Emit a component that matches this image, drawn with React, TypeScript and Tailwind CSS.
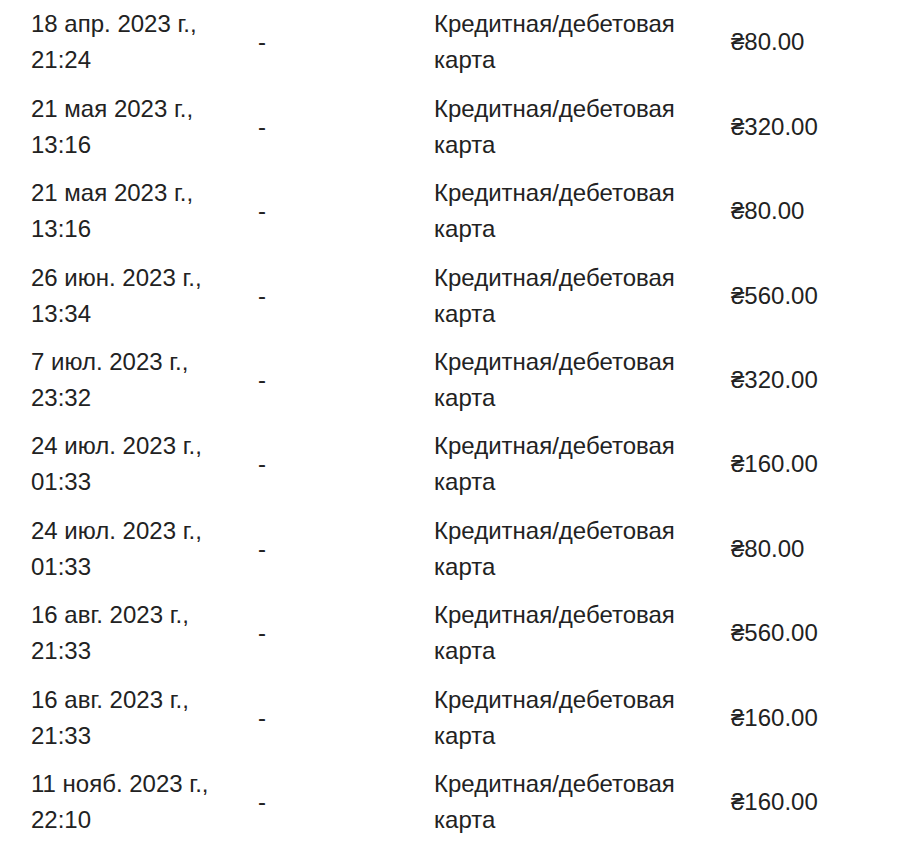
import React from 'react';

const rows = [
  { date: "18 апр. 2023 г.,", time: "21:24", amount: "₴80.00" },
  { date: "21 мая 2023 г.,", time: "13:16", amount: "₴320.00" },
  { date: "21 мая 2023 г.,", time: "13:16", amount: "₴80.00" },
  { date: "26 июн. 2023 г.,", time: "13:34", amount: "₴560.00" },
  { date: "7 июл. 2023 г.,", time: "23:32", amount: "₴320.00" },
  { date: "24 июл. 2023 г.,", time: "01:33", amount: "₴160.00" },
  { date: "24 июл. 2023 г.,", time: "01:33", amount: "₴80.00" },
  { date: "16 авг. 2023 г.,", time: "21:33", amount: "₴560.00" },
  { date: "16 авг. 2023 г.,", time: "21:33", amount: "₴160.00" },
  { date: "11 нояб. 2023 г.,", time: "22:10", amount: "₴160.00" },
];

export default function App() {
  return (
    <div
      className="w-[922px] h-[849px] bg-white overflow-hidden text-[24px] leading-[36px] text-[#222]"
      style={{ fontFamily: '"Liberation Sans", Arial, sans-serif' }}
    >
      <div className="pl-[31px]">
        {rows.map((row, i) => (
          <div
            key={i}
            className="grid grid-cols-[227px_176px_297px_1fr] items-center h-[84.44px]"
          >
            <div>
              <div>{row.date}</div>
              <div>{row.time}</div>
            </div>
            <div>-</div>
            <div>
              <div>Кредитная/дебетовая</div>
              <div>карта</div>
            </div>
            <div>{row.amount}</div>
          </div>
        ))}
      </div>
    </div>
  );
}
